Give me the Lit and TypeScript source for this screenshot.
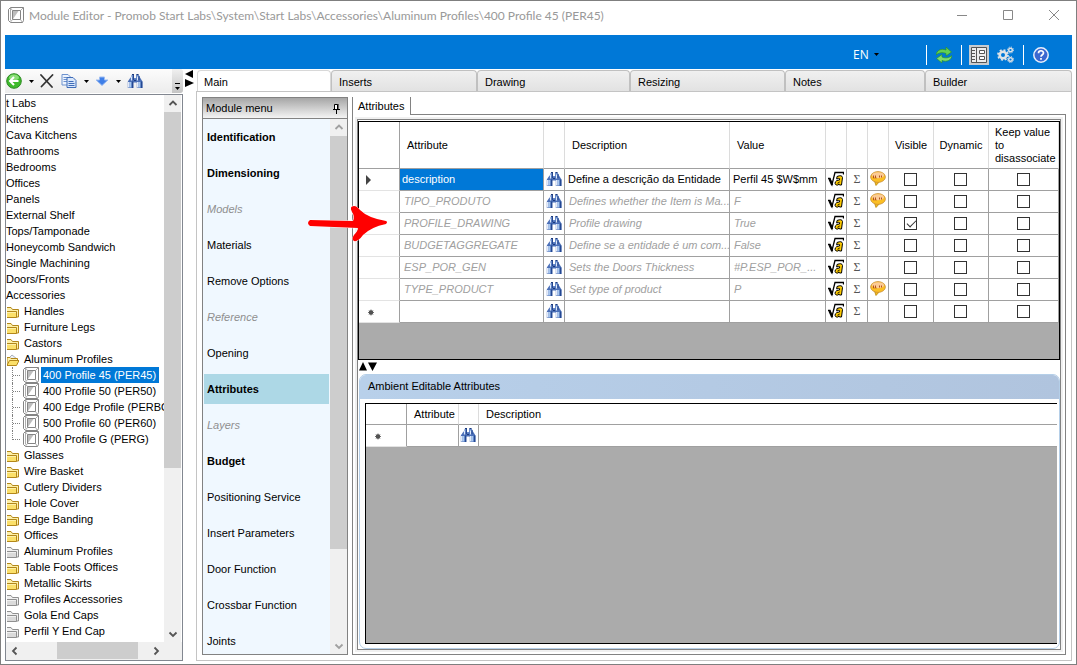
import { LitElement, html, css, svg, nothing } from "lit";
import { customElement, property, state } from "lit/decorators.js";
import { classMap } from "lit/directives/class-map.js";

const binoculars = () => html`<svg width="16" height="16" viewBox="0 0 16 16" aria-hidden="true">
  ${svg`<path d="M4 3.500L5 1.500h2V5h2V1.500h2.500L13 4v3H4z" fill="#6488c9"/>
  <path d="M.8 8.500L3.500 4.500h3l1 2h1l1-2h3.500l2.500 4V15H9.800V9.500H6.300V15H.8z" fill="#4a6fb8"/>
  <path d="M1.800 9v5.500M10.800 9v5.500" stroke="#f2f8ff" stroke-width="1.400"/>
  <path d="M3.400 9v5.500M12.400 9v5.500" stroke="#a9c8ef" stroke-width="1.800"/>
  <path d="M5.700 8.500V15M14.700 8.500V15" stroke="#20458f" stroke-width="1.200"/>
  <path d="M4.500 3.500v4M10.500 3.500v4" stroke="#dce9fa" stroke-width="1.200"/>
  <path d="M6.500 2v5M12 3v4" stroke="#27488f"/>
  <path d="M7 7.500h2M5 1.500h2M9.500 1.500h2" stroke="#1c3a7d" stroke-width="1.200"/>`}
</svg>`;

const formula = () => html`<svg width="16" height="16" viewBox="0 0 16 16" aria-hidden="true">
  ${svg`<path d="M0 7.500h2l2 6L7 1.500h8.500v2" fill="none" stroke="#000" stroke-width="1.300"/>
  <path d="M1.500 8l2.700 6" stroke="#000" stroke-width="2.200"/>
  <path d="M9 5.500q5-2 5.500 1L13.500 14h-2l-.3-.8q-1.500 1.300-3 .8-1.700-1-.9-3 1-2 4.200-2l.2-1.300q-1.200-.8-3 .3z" fill="#fc0" stroke="#000" stroke-width="1"/>
  <path d="M9.500 12.200q1.500 0 2-1.500" fill="none" stroke="#000" stroke-width="1"/>`}
</svg>`;

const balloon = () => html`<svg width="16" height="16" viewBox="0 0 16 16" aria-hidden="true">
  ${svg`<path d="M4.500 10l1.500 4.500L10 10z" fill="#f5b818" stroke="#b8860b" stroke-width=".8"/>
  <ellipse cx="8" cy="6" rx="7.400" ry="5.400" fill="#fbbf24" stroke="#c98f3a" stroke-width=".8"/>
  <ellipse cx="8" cy="4.200" rx="6" ry="3" fill="#fbcb96"/>
  <path d="M3.500 4.500v2.500h1M5.500 4.500v2.500h1M9.500 4.500v2M11.500 4.500v2" fill="none" stroke="#b5521c" stroke-width="1"/>`}
</svg>`;

const cube = () => html`<svg width="16" height="16" viewBox="0 0 16 16" aria-hidden="true">
  ${svg`<path d="M.5 2.500L2.500.5h13v13l-1 2h-12l-2-2z" fill="#fff" stroke="#858585"/>
  <path d="M4.500 3.500h8v9h-8z" fill="#fff" stroke="#858585"/>
  <path d="M5 4h5.500L5 12z" fill="#bdbdbd"/>
  <path d="M2.500 1v12.500M15.500.5l-3 3M12.500 12.500l2 3M4.500 12.500l-2 2.500M2.500 1l2 2.500" fill="none" stroke="#999" stroke-width=".8"/>`}
</svg>`;

const folder = (kind: string) => {
  const gray = kind === "gray";
  const edge = gray ? "#909090" : "#b3871a";
  const face = gray ? "#dadada" : "#fbe06a";
  const light = gray ? "#f0f0f0" : "#fdf0a8";
  return html`<svg width="12" height="12" viewBox="0 0 12 12" aria-hidden="true">
    ${kind === "open"
      ? svg`<path d="M1 5l4-4 5 4z" fill="#eef1f6" stroke="#a7b0be"/>
        <path d="M0 10.500V3.500h3l1 1h6.500v3" fill="${light}" stroke="${edge}"/>
        <path d="M0 11.500L2.500 6.500h9.500L9.500 11.500z" fill="${face}" stroke="${edge}"/>`
      : svg`<path d="M0 1.500h4l1.500 2h6v7.500H0" fill="${light}" stroke="${edge}"/>
        <path d="M0 5.500h9.500v6H0" fill="${face}" stroke="${edge}"/>
        <path d="M0 6.500h9" stroke="${light}"/>`}
  </svg>`;
};

const chevron = (dir: "up" | "down" | "left" | "right", dim = false) => {
  const d = {
    up: "M1.500 6L5 2.500 8.500 6",
    down: "M1.500 3.500L5 7l3.500-3.500",
    left: "M6.500 1.500L3 5l3.500 3.500",
    right: "M3.500 1.500L7 5 3.500 8.500",
  }[dir];
  return html`<svg width="10" height="10" viewBox="0 0 10 10" aria-hidden="true">
    ${svg`<path d="${d}" fill="none" stroke="${dim ? "#a0a0a0" : "#555"}" stroke-width="1.800"/>`}
  </svg>`;
};

const caret = () => html`<svg width="5" height="3" viewBox="0 0 5 3" aria-hidden="true">
  ${svg`<path d="M0 0h5L2.500 3z" fill="#000"/>`}
</svg>`;

const base = css`
  * { box-sizing: border-box; }
  svg { display: block; flex: none; }
  button, select {
    font: inherit; color: inherit; background: none; border: 0; padding: 0; margin: 0;
    border-radius: 0; text-align: left; appearance: none;
  }
`;

@customElement("title-bar")
class TitleBar extends LitElement {
  static styles = [base, css`
    :host { display: flex; align-items: center; height: 28px; margin-bottom: 6px; padding: 0 12px 0 3px;
      font-family: Lato, "Noto Sans", sans-serif; font-size: 12px; color: #999; }
    .title { margin: 0 auto 0 5px; font: inherit; white-space: nowrap; }
    .controls { display: flex; gap: 34px; }
    .controls button { width: 12px; height: 12px; }
  `];
  render() {
    return html`${cube()}
      <h1 class="title">Module Editor - Promob Start Labs\\System\\Start Labs\\Accessories\\Aluminum Profiles\\400 Profile 45 (PER45)</h1>
      <div class="controls">
        <button aria-label="Minimize"><svg width="12" height="12">${svg`<path d="M1 6.500h10" stroke="#888"/>`}</svg></button>
        <button aria-label="Maximize"><svg width="12" height="12">${svg`<path d="M1.500 1.500h9v9h-9z" fill="none" stroke="#888"/>`}</svg></button>
        <button aria-label="Close"><svg width="12" height="12">${svg`<path d="M1 1l10 10M11 1L1 11" stroke="#888"/>`}</svg></button>
      </div>`;
  }
}

@customElement("command-bar")
class CommandBar extends LitElement {
  static styles = [base, css`
    :host { display: flex; align-items: center; justify-content: flex-end; gap: 7px; height: 34px;
      padding: 5px 21px 0 8px; background: #0078d7; color: #fff;
      font-family: "Open Sans", "Noto Sans", sans-serif; font-size: 12px; }
    .lang { display: flex; align-items: center; margin-right: 40px; }
    .lang select { width: 21px; }
    .lang option { color: #000; }
    .sep { width: 1px; height: 20px; background: #fff; }
    .btn { width: 20px; height: 20px; display: flex; align-items: center; justify-content: center; }
    .on { background: #c8ccd0; }
  `];
  render() {
    return html`
      <label class="lang"><select aria-label="Language"><option>EN</option></select>${caret()}</label>
      <span class="sep"></span>
      <button class="btn" aria-label="Refresh"><svg width="16" height="16" viewBox="0 0 16 16">${svg`
        <path d="M0 8C.5 3.500 5 1 10 3V0l5.500 5L10 9V6.500C6.500 5 3 5.500 0 8z" fill="#63d053" stroke="#2a8f2f" stroke-width=".7"/>
        <path d="M16 8.500c-.5 4.500-5 7-10 5V16L.5 11.500 6 7.500V10c3.500 1.500 7 1 10-1.500z" fill="#7edc6c" stroke="#2a8f2f" stroke-width=".7"/>`}</svg></button>
      <span class="sep"></span>
      <button class="btn on" aria-label="Panel" aria-pressed="true"><svg width="16" height="16" viewBox="0 0 16 16">${svg`
        <path d="M.5.5h15v15H.5z" fill="#ededed" stroke="#555"/><path d="M5.500 0v16" stroke="#555"/>
        <path d="M1 3.500h3M1 6.500h3M1 9.500h3M1 12.500h3" stroke="#555"/>
        <path d="M8.500 3.500h5v3h-5zM8.500 9.500h5v3h-5z" fill="#fff" stroke="#555"/>`}</svg></button>
      <button class="btn" aria-label="Settings"><svg width="18" height="18" viewBox="0 0 18 18">${svg`
        <circle cx="6" cy="9" r="3.300" fill="none" stroke="#dfe3e6" stroke-width="2.600"/>
        <circle cx="6" cy="9" r="5" fill="none" stroke="#dfe3e6" stroke-width="1.800" stroke-dasharray="1.960 1.960"/>
        <circle cx="13.500" cy="4" r="1.800" fill="none" stroke="#dfe3e6" stroke-width="1.400"/>
        <circle cx="13.500" cy="4" r="3" fill="none" stroke="#dfe3e6" stroke-width="1" stroke-dasharray="1.180 1.180"/>
        <circle cx="13.500" cy="13.500" r="1.800" fill="none" stroke="#dfe3e6" stroke-width="1.400"/>
        <circle cx="13.500" cy="13.500" r="3" fill="none" stroke="#dfe3e6" stroke-width="1" stroke-dasharray="1.180 1.180"/>`}</svg></button>
      <span class="sep"></span>
      <button class="btn" aria-label="Help"><svg width="16" height="16" viewBox="0 0 16 16">${svg`
        <circle cx="8" cy="8" r="7.200" fill="#3b68d0" stroke="#e8eefb" stroke-width="1.500"/>
        <path d="M5.500 6.200C5.500 3 10.500 3 10.500 6c0 1.800-2.500 1.700-2.500 3.800M8 11v1.700" fill="none" stroke="#fff" stroke-width="1.700"/>`}</svg></button>`;
  }
}

@customElement("scroll-track")
class ScrollTrack extends LitElement {
  @property({ type: Boolean, reflect: true }) horizontal = false;
  @property({ type: Boolean }) dim = false;
  @property({ type: Number }) start = 0;
  @property({ type: Number }) size = 50;
  static styles = [base, css`
    :host { display: flex; flex-direction: column; width: 17px; background: #f0f0f0; }
    :host([horizontal]) { flex-direction: row; width: auto; height: 17px; }
    button { flex: none; width: 17px; height: 17px; display: grid; place-items: center; }
    .track { flex: 1; display: flex; flex-direction: inherit; }
    .thumb { background: #cdcdcd; }
  `];
  render() {
    const h = this.horizontal;
    return html`
      <button aria-label="Scroll back">${chevron(h ? "left" : "up", this.dim)}</button>
      <div class="track">
        <div style="flex: ${this.start} 0 0"></div>
        <div class="thumb" style="flex: ${this.size} 0 0"></div>
        <div style="flex: ${1000 - this.start - this.size} 0 0"></div>
      </div>
      <button aria-label="Scroll forward">${chevron(h ? "right" : "down", this.dim)}</button>`;
  }
}

type Node = { t: string; k: "plain" | "yellow" | "gray" | "open" | "leaf" };
const plain = ["t Labs", "Kitchens", "Cava Kitchens", "Bathrooms", "Bedrooms", "Offices", "Panels", "External Shelf",
  "Tops/Tamponade", "Honeycomb Sandwich", "Single Machining", "Doors/Fronts", "Accessories"];
const nodes: Node[] = [
  ...plain.map((t): Node => ({ t, k: "plain" })),
  { t: "Handles", k: "yellow" }, { t: "Furniture Legs", k: "yellow" }, { t: "Castors", k: "yellow" },
  { t: "Aluminum Profiles", k: "open" },
  { t: "400 Profile 45 (PER45)", k: "leaf" }, { t: "400 Profile 50 (PER50)", k: "leaf" },
  { t: "400 Edge Profile (PERBO", k: "leaf" }, { t: "500 Profile 60 (PER60)", k: "leaf" },
  { t: "400 Profile G (PERG)", k: "leaf" },
  { t: "Glasses", k: "yellow" }, { t: "Wire Basket", k: "yellow" }, { t: "Cutlery Dividers", k: "yellow" },
  { t: "Hole Cover", k: "yellow" }, { t: "Edge Banding", k: "yellow" }, { t: "Offices", k: "yellow" },
  { t: "Aluminum Profiles", k: "gray" }, { t: "Table Foots Offices", k: "yellow" }, { t: "Metallic Skirts", k: "yellow" },
  { t: "Profiles Accessories", k: "gray" }, { t: "Gola End Caps", k: "gray" }, { t: "Perfil Y End Cap", k: "gray" },
];

@customElement("library-tree")
class LibraryTree extends LitElement {
  @state() private selected = 17;
  static styles = [base, css`
    :host { display: flex; flex-direction: column; min-height: 0; }
    .tools { display: flex; align-items: center; height: 24px; padding-left: 1px; margin-bottom: 1px;
      background: linear-gradient(#fcfcfc, #ececec); border-radius: 0 3px 3px 0; }
    .tools button { height: 16px; display: grid; place-items: center; }
    .tools .drop { width: 18px; }
    .tools .copy { margin-left: 7px; }
    .tools .more { margin-left: auto; width: 11px; height: 24px; align-items: end; padding-bottom: 2px;
      background: linear-gradient(#f0f0f0, #c4c4c4); border-radius: 0 3px 3px 0; }
    .box { flex: 1; min-height: 0; display: flex; flex-direction: column; border: 1px solid #828790; background: #f0f0f0; padding: 0 0 1px; }
    .view { flex: 1; min-height: 0; display: flex; background: #fff; padding-right: 1px; }
    .list { flex: 1; min-width: 0; overflow: hidden; margin: 0; padding: 0; list-style: none; }
    .row { height: 16px; display: flex; align-items: center; gap: 4px; width: 100%; white-space: nowrap; }
    .row .name { padding: 0 2px; line-height: 16px; }
    .plain .name { margin-left: -2px; }
    .folder svg { margin: 2px 0 0 1px; }
    .folder .name { padding-left: 1px; }
    .leaf { gap: 2px; padding-left: 6px; }
    .stem { width: 9px; height: 16px; flex: none; border-left: 1px dotted #808080;
      background: linear-gradient(90deg, #808080 50%, transparent 50%) 0 8px / 2px 1px repeat-x; }
    .last .stem { height: 9px; align-self: flex-start; }
    .leaf .name { padding: 0 3px 0 2px; }
    .sel .name { background: #0078d7; color: #fff; }
    .across { margin-right: 18px; }
  `];
  render() {
    return html`
      <div class="tools" role="toolbar">
        <button aria-label="Back"><svg width="16" height="16" viewBox="0 0 16 16">${svg`
          <circle cx="8" cy="8" r="7.300" fill="#3fba2c" stroke="#2c8a22"/><ellipse cx="8" cy="4.500" rx="5" ry="3" fill="#8ade78"/>
          <path d="M12.500 8H4.500M8 4L4 8l4 4" fill="none" stroke="#fff" stroke-width="2"/>`}</svg></button>
        <button class="drop" aria-label="Back options">${caret()}</button>
        <button aria-label="Delete"><svg width="14" height="14" viewBox="0 0 14 14">${svg`
          <path d="M1 1l11 12M12.500 1L1.500 12.500" stroke="#333" stroke-width="1.800" stroke-linecap="round"/>`}</svg></button>
        <button class="copy" aria-label="Copy"><svg width="16" height="16" viewBox="0 0 16 16">${svg`
          <path d="M1 1.500h6l2.500 2.500v8H1z" fill="#eef4fd" stroke="#6e93cf"/><path d="M2.500 4.500h4M2.500 6.500h4M2.500 8.500h4" stroke="#6e93cf"/>
          <path d="M6 4.500h6l3 3v7H6z" fill="#d9e7fb" stroke="#3f6cb8"/><path d="M7.500 8.500h5M7.500 10.500h6M7.500 12.500h6" stroke="#3f6cb8"/>`}</svg></button>
        <button class="drop" aria-label="Copy options">${caret()}</button>
        <button aria-label="Move down"><svg width="14" height="12" viewBox="0 0 14 12">${svg`
          <path d="M4.500 2h5v3H13L7 10.500 1 5h3.500z" fill="#3f7fe8" stroke="#9dbcf0"/>`}</svg></button>
        <button class="drop" aria-label="Move options">${caret()}</button>
        <button aria-label="Find">${binoculars()}</button>
        <button class="more" aria-label="More tools"><svg width="7" height="8" viewBox="0 0 7 8">${svg`
          <path d="M1 .5h5" stroke="#000"/><path d="M1 4h5L3.500 7z" fill="#000"/>`}</svg></button>
      </div>
      <div class="box">
        <div class="view">
          <ul class="list">
            ${nodes.map((n, i) => html`<li>
              <button class=${classMap({ row: true, plain: n.k === "plain", leaf: n.k === "leaf",
                folder: n.k !== "plain" && n.k !== "leaf", sel: i === this.selected,
                last: n.k === "leaf" && nodes[i + 1].k !== "leaf" })}
                @click=${() => (this.selected = i)}>
                ${n.k === "plain" ? nothing : n.k === "leaf" ? html`<span class="stem"></span>${cube()}` : folder(n.k)}
                <span class="name">${n.t}</span>
              </button></li>`)}
          </ul>
          <scroll-track .start=${0} .size=${693}></scroll-track>
        </div>
        <scroll-track class="across" horizontal .start=${275} .size=${655}></scroll-track>
      </div>`;
  }
}

const menu: [string, string][] = [
  ["Identification", "bold"], ["Dimensioning", "bold"], ["Models", "off"], ["Materials", ""], ["Remove Options", ""],
  ["Reference", "off"], ["Opening", ""], ["Attributes", "bold"], ["Layers", "off"], ["Budget", "bold"],
  ["Positioning Service", ""], ["Insert Parameters", ""], ["Door Function", ""], ["Crossbar Function", ""], ["Joints", ""],
];

@customElement("module-menu")
class ModuleMenu extends LitElement {
  @state() private current = "Attributes";
  static styles = [base, css`
    :host { display: flex; flex-direction: column; min-height: 0; border: 1px solid #828282; }
    .head { flex: none; display: flex; align-items: center; justify-content: space-between; height: 21px; padding: 0 6px 0 3px;
      background: linear-gradient(#a6a6a6, #f4f4f4); border-bottom: 1px solid #828282; }
    h2 { margin: 0; font: inherit; }
    .body { flex: 1; min-height: 0; display: flex; background: #f0f8ff; }
    .list { flex: 1; overflow: hidden; padding: 0 1px; display: flex; flex-direction: column; }
    .item { flex: none; height: 30px; margin: 3px 0; padding-left: 3px; }
    .bold { font-weight: bold; }
    .off { font-style: italic; color: #8f8f8f; }
    .cur { background: #add8e6; }
  `];
  render() {
    return html`
      <div class="head"><h2>Module menu</h2>
        <button aria-label="Pin"><svg width="9" height="11" viewBox="0 0 9 11">${svg`
          <path d="M2.500 6V1.500h3V6" fill="#fff" stroke="#000"/><path d="M6 1v5.500M1 6.500h7M4.500 7v4" stroke="#000" fill="none"/>`}</svg></button></div>
      <div class="body">
        <nav class="list">${menu.map(([t, k]) => html`<button
          class=${classMap({ item: true, bold: k === "bold", off: k === "off", cur: this.current === t })}
          @click=${() => (this.current = t)}>${t}</button>`)}</nav>
        <scroll-track dim .start=${0} .size=${824}></scroll-track>
      </div>`;
  }
}

type Attr = { n: string; d: string; v: string; tip?: boolean; vis?: boolean; own?: boolean };
const attrs: Attr[] = [
  { n: "description", d: "Define a descrição da Entidade", v: "Perfil 45 $W$mm", tip: true, own: true },
  { n: "TIPO_PRODUTO", d: "Defines whether the Item is Ma...", v: "F", tip: true },
  { n: "PROFILE_DRAWING", d: "Profile drawing", v: "True", vis: true },
  { n: "BUDGETAGGREGATE", d: "Define se a entidade é um com...", v: "False" },
  { n: "ESP_POR_GEN", d: "Sets the Doors Thickness", v: "#P.ESP_POR_..." },
  { n: "TYPE_PRODUCT", d: "Set type of product", v: "P", tip: true },
  { n: "", d: "", v: "" },
];

@customElement("attribute-panel")
class AttributePanel extends LitElement {
  static styles = [base, css`
    :host { display: flex; flex-direction: column; min-width: 0; min-height: 0; }
    .strip { flex: none; display: flex; height: 18px; }
    .tab { border: solid #828282; border-width: 0 1px; padding: 0 5px; width: 59px; }
    .rest { flex: 1; border-bottom: 1px solid #828282; }
    .frame { flex: 1; min-height: 0; display: flex; border: 1px solid #828282; border-top: 0; padding: 2px; }
    .mat { flex: 1; min-width: 0; display: flex; padding: 2px; background: #f0f0f0; }
    .inner { flex: 1; min-width: 0; display: flex; flex-direction: column; border: 1px solid #828282; background: #fff; padding-top: 1px; }
    .grid { background: #ababab; border: 1px solid #000; overflow: hidden; }
    .top { flex: 0 0 239px; }
    table { width: 100%; table-layout: fixed; border-collapse: separate; border-spacing: 0; background: #fff; }
    th, td { padding: 0 3px; border: solid #a0a0a0; border-width: 0 1px 1px 0; font-weight: normal; text-align: left;
      white-space: nowrap; overflow: hidden; }
    th { padding: 0 7px; border-right-color: #dcdcdc; }
    th:first-child { border-right-color: #a0a0a0; }
    .top th { height: 47px; }
    .top th.c { text-align: center; padding: 0; }
    .top th.keep { white-space: normal; padding: 0 6px; line-height: 13px; }
    td { height: 22px; }
    td:first-child { border-bottom-color: #e3e3e3; padding: 0 7px; }
    td.i { padding: 0 1px 0 2px; }
    td.i svg { margin-bottom: 2px; }
    td.c { padding: 0 4px 0 2px; }
    .sum { font: 12px "Liberation Serif", serif; color: #555; text-align: center; padding: 0; }
    .inh { font-style: italic; color: #a0a0a0; padding-left: 4px; }
    .picked { background: #0078d7; color: #fff; padding-left: 2px; }
    input { appearance: none; display: block; width: 13px; height: 13px; margin: 0 auto; border: 1px solid #333; background: #fff; }
    input:checked { position: relative; }
    input:checked::after { content: ""; position: absolute; left: 4px; top: 0; width: 4px; height: 8px;
      border: solid #333; border-width: 0 1px 1px 0; transform: rotate(45deg); }
    .w-head { width: 41px; } .w-name { width: 144px; } .w-icon { width: 21px; } .w-val { width: 96px; }
    .w-vis { width: 45px; } .w-dyn { width: 55px; } .w-keep { width: 70px; } .w-short { width: 52px; } .w-find { width: 20px; }
    .split { flex: none; height: 14px; padding: 2px 1px; }
    .card { flex: 1; min-height: 0; margin-left: 1px; display: flex; flex-direction: column; border: 1px solid #b5cfe8; border-radius: 7px; overflow: hidden; }
    h2 { margin: 0; flex: none; height: 24px; padding-left: 8px; font: inherit; line-height: 23px;
      background: linear-gradient(90deg, #b8d0ea, #b0c4de); }
    .low { flex: 1; min-height: 0; margin: 4px 2px 4px 5px; border-right: 0; }
    .low tr > :last-child { border-right: 0; }
    .low th { height: 21px; }
    .low td.i { padding-left: 1px; }
  `];
  render() {
    const mark = (i: number) => i === 0
      ? html`<svg width="5" height="10" viewBox="0 0 5 10">${svg`<path d="M0 0l5 5-5 5z" fill="#444"/>`}</svg>`
      : i === attrs.length - 1 ? this.star() : nothing;
    return html`
      <div class="strip"><button class="tab">Attributes</button><div class="rest"></div></div>
      <div class="frame"><div class="mat"><div class="inner">
        <div class="grid top"><table>
          <colgroup><col class="w-head"><col class="w-name"><col class="w-icon"><col><col class="w-val">
            <col class="w-icon"><col class="w-icon"><col class="w-icon"><col class="w-vis"><col class="w-dyn"><col class="w-keep"></colgroup>
          <thead><tr><th></th><th>Attribute</th><th></th><th>Description</th><th>Value</th><th></th><th></th><th></th>
            <th class="c">Visible</th><th class="c">Dynamic</th><th class="keep">Keep value to disassociate</th></tr></thead>
          <tbody>${attrs.map((a, i) => html`<tr>
            <td>${mark(i)}</td>
            <td class=${a.own ? "picked" : "inh"}>${a.n}</td>
            <td class="i">${binoculars()}</td>
            <td class=${a.own ? "" : "inh"}>${a.d}</td>
            <td class=${a.own ? "" : "inh"}>${a.v}</td>
            <td class="i">${formula()}</td>
            <td class="sum">Σ</td>
            <td class="i">${a.tip ? balloon() : nothing}</td>
            <td class="c"><input type="checkbox" aria-label="Visible" ?checked=${a.vis}></td>
            <td class="c"><input type="checkbox" aria-label="Dynamic"></td>
            <td><input type="checkbox" aria-label="Keep value to disassociate"></td>
          </tr>`)}</tbody>
        </table></div>
        <div class="split"><svg width="18" height="9" viewBox="0 0 18 9">${svg`<path d="M0 8.500h8L4 0zM9 .5h9L13.500 9z" fill="#000"/>`}</svg></div>
        <section class="card">
          <h2>Ambient Editable Attributes</h2>
          <div class="grid low"><table>
            <colgroup><col class="w-head"><col class="w-short"><col class="w-find"><col></colgroup>
            <thead><tr><th></th><th>Attribute</th><th></th><th>Description</th></tr></thead>
            <tbody><tr><td>${this.star()}</td><td></td><td class="i">${binoculars()}</td><td></td></tr></tbody>
          </table></div>
        </section>
      </div></div></div>`;
  }
  private star() {
    return html`<svg width="9" height="8" viewBox="0 0 9 8">${svg`
      <circle cx="5" cy="4.500" r="2.200" fill="#444"/>
      <path d="M5 1.500v6M2 4.500h6M3 2.500l4 4M7 2.500l-4 4" stroke="#555" stroke-width=".8"/>`}</svg>`;
  }
}

@customElement("app-root")
class AppRoot extends LitElement {
  @state() private tab = "Main";
  static styles = [base, css`
    :host { display: flex; flex-direction: column; position: relative; box-sizing: border-box; height: 100vh; min-height: 480px;
      border: 1px solid #7f7f7f; padding: 0 4px 3px; background: #fff; color: #000; overflow: hidden;
      font-family: "Liberation Sans", Arial, sans-serif; font-size: 11px; line-height: 13px; }
    .work { flex: 1; min-height: 0; display: grid; grid-template-columns: 178px 13px minmax(0, 1fr); grid-template-rows: minmax(0, 1fr); }
    .splitter { padding: 1px 2px; }
    .main { display: flex; flex-direction: column; min-height: 0; padding-top: 1px; }
    .tabs { flex: none; display: grid; grid-template-columns: 134fr 146fr 153fr 155fr 140fr 147fr; height: 21px; padding-left: 1px; }
    .tab { padding: 2px 7px 0; background: linear-gradient(#f0f0f0, #e2e2e2); border: solid #c0c0c0; border-width: 1px 1px 0 1px;
      border-radius: 4px 4px 0 0; }
    .tab.on { background: #fff; border-color: #d8d8d8; padding-left: 6px; }
    .page { flex: 1; min-height: 0; display: grid; grid-template-columns: 146px minmax(0, 1fr); grid-template-rows: minmax(0, 1fr);
      gap: 4px; padding: 5px; border: 1px solid #c4c4c4; }
    .pointer { position: absolute; left: 305px; top: 203px; }
  `];
  render() {
    return html`
      <title-bar></title-bar>
      <command-bar></command-bar>
      <div class="work">
        <library-tree></library-tree>
        <div class="splitter"><svg width="10" height="17" viewBox="0 0 10 17">${svg`<path d="M8 0v8L0 4zM0 9v8l9-4z" fill="#000"/>`}</svg></div>
        <main class="main">
          <div class="tabs" role="tablist">${["Main", "Inserts", "Drawing", "Resizing", "Notes", "Builder"].map((t) => html`
            <button role="tab" class=${classMap({ tab: true, on: this.tab === t })} @click=${() => (this.tab = t)}>${t}</button>`)}</div>
          <div class="page"><module-menu></module-menu><attribute-panel></attribute-panel></div>
        </main>
      </div>
      <svg class="pointer" width="82" height="40" viewBox="0 0 82 40" aria-hidden="true">${svg`
        <path d="M4 16l43 1Q49 12 46 8q-3-6 2-6 3 0 6 4 8 8 26 11 2 1 0 3-15 3-23 11-5 7-9 6-3-2 0-6 4-4 4-7L4 22q-4-3 0-6z"
          fill="#f00" stroke="#fff" stroke-width="1" stroke-linejoin="round" paint-order="stroke"/>`}</svg>`;
  }
}
